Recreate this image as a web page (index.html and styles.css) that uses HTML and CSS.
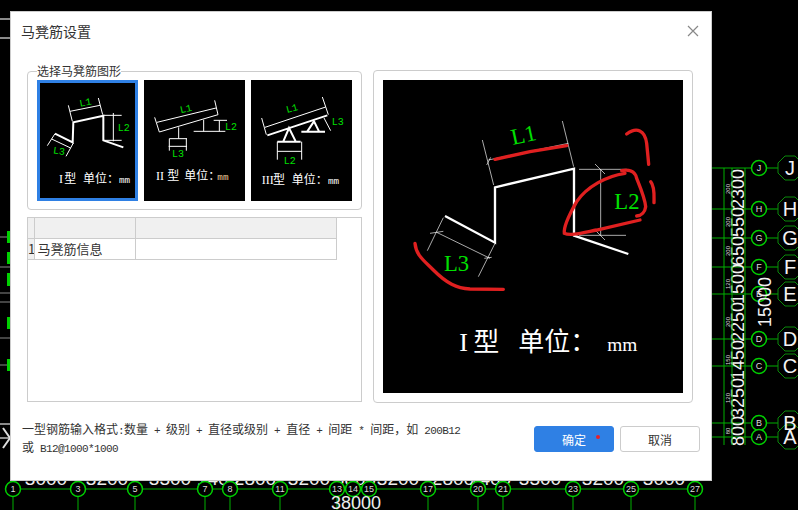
FILE: index.html
```html
<!DOCTYPE html>
<html>
<head>
  <meta charset="utf-8">
  <title>马凳筋设置</title>
  <link rel="stylesheet" href="styles.css">
</head>
<body>
  <!-- CAD drawing behind the dialog -->
  <svg class="cad" width="798" height="510" viewBox="0 0 798 510">
    <defs>
      <polygon id="oct" points="-5,-12 5,-12 12,-5 12,5 5,12 -5,12 -12,5 -12,-5"/>
    </defs>
    <g class="grey">
      <path d="M0 19H10M0 38H10M0 424H10M0 438H10"/>
      <path class="faint" d="M0 237H8M0 267H10M0 293H10M0 302H10M0 338H10M0 365H8"/>
      <path class="arrow" d="M3 428L10 438L3 448"/>
    </g>
    <g class="bars">
      <rect x="7" y="231" width="3" height="12"/>
      <rect x="7" y="252" width="3" height="12"/>
      <rect x="7" y="273" width="3" height="13"/>
      <rect x="7" y="317" width="3" height="12"/>
      <rect x="7" y="359" width="3" height="12"/>
    </g>

    <g class="axis">
      <path d="M13 489H695"/>
      <path d="M13 496V510M78 496V510M135 496V510M205 496V510M230 496V510M280 496V510M337 496V510M353 496V510M369 496V510M428 496V510M478 496V510M503 496V510M573 496V510M631 496V510M695 496V510"/>
      <path d="M712 168H778M712 209H778M712 238H778M712 267H778M712 294H778M712 339H778M712 366H778M712 423H778M712 437H778"/>
    </g>

    <g class="dims-h">
      <text x="46" y="485">3000</text>
      <text x="107" y="485">3200</text>
      <text x="170" y="485">3300</text>
      <text x="218" y="485">1400</text>
      <text x="255" y="485">2800</text>
      <text x="309" y="485">3200</text>
      <text x="355" y="485">3800</text>
      <text x="398" y="485">3200</text>
      <text x="453" y="485">2800</text>
      <text x="490" y="485">1400</text>
      <text x="540" y="485">3300</text>
      <text x="603" y="485">3200</text>
      <text x="664" y="485">3000</text>
    </g>

    <g class="bubbles">
      <circle cx="13" cy="489" r="7.5"/><circle cx="78" cy="489" r="7.5"/><circle cx="135" cy="489" r="7.5"/>
      <circle cx="205" cy="489" r="7.5"/><circle cx="230" cy="489" r="7.5"/><circle cx="280" cy="489" r="7.5"/>
      <circle cx="337" cy="489" r="7.5"/><circle cx="353" cy="489" r="7.5"/><circle cx="369" cy="489" r="7.5"/>
      <circle cx="428" cy="489" r="7.5"/><circle cx="478" cy="489" r="7.5"/><circle cx="503" cy="489" r="7.5"/>
      <circle cx="573" cy="489" r="7.5"/><circle cx="631" cy="489" r="7.5"/><circle cx="695" cy="489" r="7.5"/>
      <circle cx="759" cy="168" r="7.5"/><circle cx="759" cy="209" r="7.5"/><circle cx="759" cy="238" r="7.5"/>
      <circle cx="759" cy="267" r="7.5"/><circle cx="759" cy="294" r="7.5"/><circle cx="759" cy="339" r="7.5"/>
      <circle cx="759" cy="366" r="7.5"/><circle cx="759" cy="423" r="7.5"/><circle cx="759" cy="437" r="7.5"/>
    </g>
    <g class="bubble-text">
      <text x="13" y="492">1</text><text x="78" y="492">3</text><text x="135" y="492">5</text>
      <text x="205" y="492">7</text><text x="230" y="492">8</text><text x="280" y="492">11</text>
      <text x="337" y="492">13</text><text x="353" y="492">14</text><text x="369" y="492">15</text>
      <text x="428" y="492">17</text><text x="478" y="492">20</text><text x="503" y="492">21</text>
      <text x="573" y="492">23</text><text x="631" y="492">25</text><text x="695" y="492">27</text>
      <text x="759" y="171">J</text><text x="759" y="212">H</text><text x="759" y="241">G</text>
      <text x="759" y="270">F</text><text x="759" y="297">E</text><text x="759" y="342">D</text>
      <text x="759" y="369">C</text><text x="759" y="426">B</text><text x="759" y="440">A</text>
    </g>
    <text class="total" x="356" y="509">38000</text>

    <g class="dims-v">
      <text transform="translate(738 431) rotate(-90)">800</text>
      <text transform="translate(738 398) rotate(-90)">3250</text>
      <text transform="translate(738 360) rotate(-90)">1450</text>
      <text transform="translate(738 322) rotate(-90)">2250</text>
      <text transform="translate(738 284) rotate(-90)">1500</text>
      <text transform="translate(738 251) rotate(-90)">650</text>
      <text transform="translate(738 222) rotate(-90)">550</text>
      <text transform="translate(738 189) rotate(-90)">2300</text>
      <text transform="translate(765 302) rotate(-90)">15000</text>
    </g>
    <g class="dims-small">
      <text transform="translate(728 431) rotate(-90)">80</text>
      <text transform="translate(728 398) rotate(-90)">120</text>
      <text transform="translate(728 360) rotate(-90)">150</text>
      <text transform="translate(728 322) rotate(-90)">200</text>
      <text transform="translate(728 284) rotate(-90)">120</text>
      <text transform="translate(728 251) rotate(-90)">200</text>
      <text transform="translate(728 222) rotate(-90)">200</text>
      <text transform="translate(728 189) rotate(-90)">200</text>
    </g>
    <path class="axis-v" d="M724 168V445M732 168V445M745 168V445"/>

    <g class="hexes">
      <use href="#oct" x="790" y="168"/><use href="#oct" x="790" y="209"/><use href="#oct" x="790" y="238"/>
      <use href="#oct" x="790" y="267"/><use href="#oct" x="790" y="294"/><use href="#oct" x="790" y="339"/>
      <use href="#oct" x="790" y="366"/><use href="#oct" x="790" y="423"/><use href="#oct" x="790" y="437"/>
    </g>
    <g class="hex-text">
      <text x="790" y="175">J</text><text x="790" y="216">H</text><text x="790" y="245">G</text>
      <text x="790" y="274">F</text><text x="790" y="301">E</text><text x="790" y="346">D</text>
      <text x="790" y="373">C</text><text x="790" y="430">B</text><text x="790" y="444">A</text>
    </g>
  </svg>

  <div class="dialog">
    <div class="dialog-head">
      <span class="dialog-title">马凳筋设置</span>
      <svg class="close" width="12" height="12" viewBox="0 0 12 12"><path d="M1 1L11 11M11 1L1 11"/></svg>
    </div>

    <div class="dialog-body">
      <div class="left-col">
        <div class="shape-group">
          <span class="group-label">选择马凳筋图形</span>

          <svg class="thumb selected" viewBox="6 6 303 363">
            <path class="thin" d="M100 82L112 130M190 60L203 110M105 100L195 82M205 112H260M205 187H260M235 105V190M60 167L37 203M50 183L107 210M115 195L93 235"/>
            <path class="thick" d="M60 167L113 193L115 133L205 113V187L265 208"/>
            <text class="lbl" x="135" y="86" transform="rotate(-10 135 86)">L1</text>
            <text class="lbl" x="248" y="159">L2</text>
            <text class="lbl" x="53" y="226" transform="rotate(8 53 226)">L3</text>
            <text class="cap" y="316"><tspan class="serif" x="72">I</tspan><tspan x="88">型</tspan><tspan x="144">单位：</tspan><tspan class="unit" x="252">mm</tspan></text>
          </svg>

          <svg class="thumb" viewBox="6 6 303 363">
            <path class="thin" d="M45 133L222 90M52 162L228 110M38 118L52 162M218 67L228 110M110 148V182M82 182H135M80 205H135M82 182V218M133 182V218M185 125V160M155 160H250M215 127H255M232 127V160"/>
            <text class="lbl" x="116" y="106" transform="rotate(-13 116 106)">L1</text>
            <text class="lbl" x="249" y="156">L2</text>
            <text class="lbl" x="90" y="237">L3</text>
            <text class="cap" y="306"><tspan class="serif" x="42">II</tspan><tspan x="76">型</tspan><tspan x="127">单位：</tspan><tspan class="unit warm" x="226">mm</tspan></text>
          </svg>

          <svg class="thumb" viewBox="6 6 303 363">
            <path class="thin" d="M48 148L230 87M38 120L52 170M220 57L238 110M85 191V245M158 191V245M85 220H158M225 120L245 158"/>
            <path class="thick" d="M55 172L235 112M103 190L120 150L140 190M85 191H155M175 160L195 130L210 160M157 161H228"/>
            <text class="lbl" x="114" y="105" transform="rotate(-15 114 105)">L1</text>
            <text class="lbl" x="248" y="140">L3</text>
            <text class="lbl" x="104" y="258">L2</text>
            <text class="cap" y="318"><tspan class="serif" x="38">III</tspan><tspan x="72">型</tspan><tspan x="128">单位：</tspan><tspan class="unit" x="237">mm</tspan></text>
          </svg>
        </div>

        <div class="table-box">
          <table class="rebar-table">
            <tr class="head"><td class="num"></td><td class="name"></td><td class="val"></td></tr>
            <tr><td class="num">1</td><td class="name">马凳筋信息</td><td class="val"></td></tr>
          </table>
        </div>
      </div>

      <div class="preview">
        <svg class="preview-img" width="300" height="313" viewBox="9 30 900 939">
          <path class="thin3" d="M307 210L341 345M547 153L581 290M325 270L565 220M597 298H740M597 496H738M662 298V496M645 282L675 312M645 480L675 510M190 443L142 542M345 520L295 620M170 487L330 565M150 490L190 484M313 565L335 562M320 285L332 262"/>
          <path class="thick3" d="M195 438L345 518V352L582 296V497L745 552"/>
          <text class="lbl3" x="398" y="225" transform="rotate(-12 398 225)">L1</text>
          <text class="lbl3" x="703" y="417">L2</text>
          <text class="lbl3" x="192" y="603">L3</text>
          <text class="cap3" y="843"><tspan class="serif" x="238">I</tspan><tspan x="280">型</tspan><tspan x="415">单位：</tspan><tspan class="unit3" x="682">mm</tspan></text>
          <g class="red">
            <path d="M345 268L450 245L560 227"/>
            <path d="M740 192C770 170 795 180 800 220C803 250 805 270 806 283"/>
            <path d="M812 335C825 350 822 380 822 398"/>
            <path d="M735 310C680 318 620 350 590 395C570 430 550 470 553 490C570 498 600 490 650 480L780 450"/>
            <path d="M725 302C745 298 765 302 770 325C780 350 795 385 797 410C795 425 785 437 770 438"/>
            <path d="M105 520C108 555 130 570 160 600C200 640 230 655 270 657L370 658"/>
          </g>
        </svg>
      </div>
    </div>

    <div class="dialog-foot">
      <p class="note">一型钢筋输入格式<span class="latin">:</span>数量<span class="latin"> + </span>级别<span class="latin"> + </span>直径或级别<span class="latin"> + </span>直径<span class="latin"> + </span>间距<span class="latin"> * </span>间距，如<span class="latin"> 200B12</span><br>或<span class="latin"> B12@1000*1000</span></p>
      <div class="buttons">
        <button class="btn primary">确定<i class="dot"></i></button>
        <button class="btn">取消</button>
      </div>
    </div>
  </div>
</body>
</html>
```

FILE: styles.css
```css
/* Page and CAD backdrop */
body {
  margin: 0;
  width: 798px;
  height: 510px;
  overflow: hidden;
  background: #000;
  font-family: "Noto Sans CJK SC", "Liberation Sans", sans-serif;
  color: #333;
}

.cad {
  position: absolute;
  left: 0;
  top: 0;
  font-family: "Liberation Sans", sans-serif;
}

.grey path {
  fill: none;
  stroke: #8a8a8a;
  stroke-width: 2;
}

.grey .faint {
  stroke: #444;
}

.grey .arrow {
  stroke: #ddd;
}

.bars rect {
  fill: #00d000;
}

.axis path,
.axis-v {
  fill: none;
  stroke: #00b000;
  stroke-width: 1;
}

.dims-h text {
  fill: #eee;
  font-size: 19px;
  text-anchor: middle;
}

.total {
  fill: #eee;
  font-size: 18px;
  text-anchor: middle;
}

.dims-v text {
  fill: #f2f2f2;
  font-size: 18px;
  text-anchor: middle;
  dominant-baseline: central;
}

.dims-small text {
  fill: #ddd;
  font-size: 6px;
  text-anchor: middle;
  dominant-baseline: central;
}

.bubbles circle {
  fill: #000;
  stroke: #00d000;
  stroke-width: 1.5;
}

.bubble-text text {
  fill: #ddd;
  font-size: 9px;
  text-anchor: middle;
}

.hexes use {
  fill: #000;
  stroke: #0a8a0a;
  stroke-width: 1;
}

.hex-text text {
  fill: #f2f2f2;
  font-size: 20px;
  text-anchor: middle;
}

/* Dialog */
.dialog {
  position: absolute;
  left: 10px;
  top: 11px;
  width: 702px;
  height: 470px;
  box-sizing: border-box;
  border: 1px solid #ccc;
  background: #fff;
}

.dialog-head {
  display: flex;
  align-items: center;
  justify-content: space-between;
  height: 38px;
  margin-bottom: 20px;
  padding: 0 12px 0 10px;
}

.dialog-title {
  font-size: 14px;
}

.close path {
  fill: none;
  stroke: #888;
  stroke-width: 1.2;
}

.dialog-body {
  display: flex;
  gap: 11px;
  padding-left: 16px;
}

.left-col {
  display: flex;
  flex-direction: column;
  gap: 7px;
  width: 335px;
  padding-top: 1px;
}

/* Shape chooser */
.shape-group {
  position: relative;
  display: flex;
  gap: 6px;
  box-sizing: border-box;
  height: 139px;
  padding: 8px 9px;
  border: 1px solid #ccc;
  border-radius: 4px;
}

.group-label {
  position: absolute;
  left: 9px;
  top: -8px;
  background: #fff;
  font-size: 12px;
  line-height: 14px;
}

.thumb {
  width: 101px;
  height: 121px;
  background: #000;
}

.thumb.selected {
  outline: 3px solid #2f80e4;
  outline-offset: -3px;
}

.thin {
  fill: none;
  stroke: #fff;
  stroke-width: 3;
}

.thick {
  fill: none;
  stroke: #fff;
  stroke-width: 6;
}

.lbl {
  fill: #00e000;
  font-family: "Liberation Mono", monospace;
  font-size: 30px;
}

.cap {
  fill: #fff;
  font-family: "Noto Sans CJK SC", sans-serif;
  font-size: 36px;
}

.serif {
  font-family: "Liberation Serif", serif;
}

.unit {
  font-family: "Liberation Mono", monospace;
  font-size: 28px;
}

.warm {
  fill: #f3cf9c;
}

/* Info table */
.table-box {
  box-sizing: border-box;
  height: 185px;
  border: 1px solid #ccc;
}

.rebar-table {
  border-collapse: collapse;
  table-layout: fixed;
  width: 308px;
}

.rebar-table td {
  box-sizing: border-box;
  height: 21px;
  padding: 0;
  border: 1px solid #ccc;
  border-top: 0;
  border-left: 0;
  font-size: 13px;
  line-height: 20px;
  white-space: nowrap;
}

.rebar-table .num {
  width: 6px;
  background: #f0f0f0;
  overflow: hidden;
}

.rebar-table .name {
  width: 101px;
  padding-left: 3px;
}

.rebar-table .val {
  width: 201px;
}

.rebar-table .head td {
  height: 20px;
  background: #f0f0f0;
}

/* Big preview */
.preview {
  box-sizing: border-box;
  width: 320px;
  height: 333px;
  padding: 9px;
  border: 1px solid #ccc;
  border-radius: 4px;
}

.preview-img {
  display: block;
  background: #000;
}

.thin3 {
  fill: none;
  stroke: #fff;
  stroke-width: 2;
}

.thick3 {
  fill: none;
  stroke: #fff;
  stroke-width: 7;
}

.lbl3 {
  fill: #00e000;
  font-family: "Liberation Serif", serif;
  font-size: 68px;
}

.cap3 {
  fill: #fff;
  font-family: "Noto Sans CJK SC", sans-serif;
  font-size: 78px;
}

.unit3 {
  font-family: "Liberation Serif", serif;
  font-size: 58px;
}

.red path {
  fill: none;
  stroke: #e02020;
  stroke-width: 10;
  stroke-linecap: round;
}

/* Footer */
.dialog-foot {
  display: flex;
  align-items: center;
  justify-content: space-between;
  height: 26px;
  margin-top: 23px;
  padding: 0 11px;
}

.note {
  margin: 0;
  font-size: 12px;
  line-height: 15px;
}

.latin {
  font-family: "Liberation Mono", monospace;
  font-size: 11px;
  letter-spacing: -0.6px;
}

.buttons {
  display: flex;
  gap: 6px;
}

.btn {
  position: relative;
  width: 80px;
  height: 26px;
  padding: 0;
  border: 1px solid #ccc;
  border-radius: 3px;
  background: #fff;
  color: #333;
  font-family: "Noto Sans CJK SC", sans-serif;
  font-size: 12px;
}

.btn.primary {
  border-color: #2f80e4;
  background: #2f80e4;
  color: #fff;
}

.dot {
  position: absolute;
  left: 61px;
  top: 8px;
  width: 4px;
  height: 4px;
  border-radius: 50%;
  background: #e8202a;
}
```
